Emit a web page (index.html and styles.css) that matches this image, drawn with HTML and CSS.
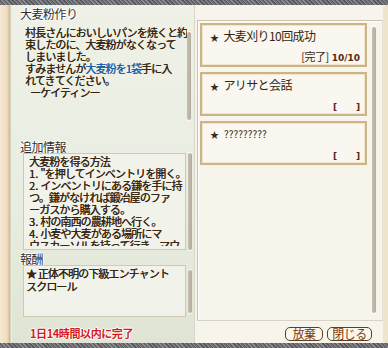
FILE: index.html
```html
<!DOCTYPE html>
<html lang="ja">
<head>
<meta charset="utf-8">
<link rel="stylesheet" href="styles.css">
</head>
<body>
<div class="win">
  <div class="stripe"></div>
  <div class="main">
    <div class="edge"></div>
    <div class="left">
      <div class="title">大麦粉作り</div>
      <div class="desc">
        <div class="desc-text">
          <div>村長さんにおいしいパンを焼くと約</div>
          <div>束したのに、大麦粉がなくなって</div>
          <div>しまいました。</div>
          <div>すみませんが<span class="hl">大麦粉を1袋</span>手に入</div>
          <div>れてきてください。</div>
          <div class="sign">ーケイティンー</div>
        </div>
        <div class="scroll desc-scroll"></div>
      </div>
      <div class="head">追加情報</div>
      <div class="row info-row">
        <div class="box info">
          <div>大麦粉を得る方法</div>
          <div><span class="num">1.</span>"を押してインベントリを開く。</div>
          <div><span class="num">2.</span>インベントリにある鎌を手に持</div>
          <div>つ。鎌がなければ鍛冶屋のファ</div>
          <div>ーガスから購入する。</div>
          <div><span class="num">3.</span>村の南西の農耕地へ行く。</div>
          <div><span class="num">4.</span>小麦や大麦がある場所にマ</div>
          <div class="cut">ウスカーソルを持って行き、マウ</div>
        </div>
        <div class="scroll"></div>
      </div>
      <div class="head head2">報酬</div>
      <div class="row reward-row">
        <div class="box reward">
          <div>★ 正体不明の下級エンチャント</div>
          <div>スクロール</div>
        </div>
        <div class="scroll reward-scroll"></div>
      </div>
      <div class="deadline">1日14時間以内に完了</div>
    </div>
    <div class="right">
      <div class="frame">
        <div class="cards">
          <div class="card">
            <div class="obj"><span class="star">★</span>大麦刈り10回成功</div>
            <div class="status"><span class="done">[完了]</span><b>10/10</b></div>
          </div>
          <div class="card">
            <div class="obj"><span class="star">★</span>アリサと会話</div>
            <div class="status"><b>[&nbsp;&nbsp;&nbsp;&nbsp;&nbsp;&nbsp;]</b></div>
          </div>
          <div class="card">
            <div class="obj small"><span class="star">★</span>?????????</div>
            <div class="status"><b>[&nbsp;&nbsp;&nbsp;&nbsp;&nbsp;&nbsp;]</b></div>
          </div>
        </div>
        <div class="scroll right-scroll"></div>
      </div>
      <div class="buttons">
        <div class="btn b1">放棄</div>
        <div class="btn b2">閉じる</div>
      </div>
    </div>
  </div>
  <div class="stripe"></div>
</div>
</body>
</html>
```
FILE: styles.css
```css
html, body {
  margin: 0;
  padding: 0;
  background: #f3f1e6;
}
.win {
  width: 388px;
  height: 348px;
  display: flex;
  flex-direction: column;
  overflow: hidden;
  font-family: "Noto Sans CJK JP", "Noto Sans", sans-serif;
  color: #36250f;
}
.stripe {
  height: 5px;
  flex: none;
  background: repeating-linear-gradient(45deg, #56575d 0 1px, #8c8c92 1px 2px, #6e6e74 2px 3px);
}
.main {
  flex: 1;
  display: flex;
  min-height: 0;
}
.edge {
  width: 12px;
  flex: none;
  background: linear-gradient(90deg, #f6e8d2 0, #efdcc0 7px, #d8c6a6 9px, #c2b698 10px, #f2f0e6 11px, #e8ece0 12px);
}
.left {
  width: 183px;
  flex: none;
  display: flex;
  flex-direction: column;
  background: linear-gradient(180deg, #eff1e7 0, #e9ede0 60%, #dfe4d4 100%);
  border-right: 1px solid #d8d6c4;
  box-sizing: border-box;
}
.title, .head {
  font-size: 12px;
  line-height: 14px;
  color: #2e2e2e;
  padding-left: 8px;
  text-shadow: 1px 0 #fff, -1px 0 #fff, 0 1px #fff, 0 -1px #fff;
  letter-spacing: -0.5px;
}
.title {
  height: 18px;
  padding-top: 2px;
  box-sizing: border-box;
}
.desc {
  height: 117px;
  display: flex;
  padding-left: 13px;
  box-sizing: border-box;
}
.desc-text {
  width: 162px;
  font-size: 11px;
  line-height: 12px;
  padding-top: 3px;
  letter-spacing: -0.9px;
  white-space: nowrap;
  overflow: hidden;
  text-shadow: 0.3px 0 currentColor;
}
.hl { color: #1f5ea6; }
.sign { padding-left: 5px; }
.scroll {
  width: 4px;
  flex: none;
  background: linear-gradient(90deg, #c7c0b2, #b3ab9c);
  border-radius: 2px;
  box-shadow: 0 1px 0 #fff, 0 -1px 0 #fff;
}
.desc-scroll {
  margin-top: 9px;
  height: 88px;
}
.head {
  height: 13px;
  line-height: 13px;
}
.head2 {
  height: 15px;
  line-height: 17px;
}
.row {
  display: flex;
  gap: 2px;
  padding-left: 11px;
}
.info-row { height: 97px; }
.reward-row { height: 52px; }
.box {
  width: 163px;
  box-sizing: border-box;
  border: 1px solid #cfc8b2;
  background: #f1f2ea;
  padding: 1px 2px 0 5px;
  font-size: 11px;
  line-height: 12px;
  letter-spacing: -0.9px;
  white-space: nowrap;
  overflow: hidden;
  text-shadow: 0.3px 0 currentColor;
}
.num {
  margin-right: 2px;
  letter-spacing: 0;
}
.info .cut {
  height: 7px;
  overflow: hidden;
}
.reward {
  padding-left: 2px;
  line-height: 13px;
  padding-top: 1px;
}
.reward-scroll {
  margin-top: 5px;
  height: 43px;
}
.deadline {
  margin-top: 9px;
  padding-left: 18px;
  font-size: 11px;
  line-height: 14px;
  font-weight: bold;
  color: #d41a1a;
  letter-spacing: -0.4px;
  text-shadow: 1px 0 #fff, -1px 0 #fff, 0 1px #fff, 0 -1px #fff;
}
.right {
  flex: 1;
  display: flex;
  flex-direction: column;
  background: #f7f5eb;
  border-right: 5px solid #efe4cc;
}
.frame {
  margin: 15px 0 0 2px;
  width: 186px;
  height: 301px;
  box-sizing: border-box;
  border: 1px solid #c8c0ae;
  border-right-color: #e6e0d2;
  border-bottom-color: #d8d2c2;
  box-shadow: inset 1px 1px 0 #fff;
  display: flex;
  padding: 2px 5px 0 2px;
  gap: 5px;
}
.cards {
  width: 167px;
  display: flex;
  flex-direction: column;
  gap: 5px;
}
.card {
  height: 44px;
  box-sizing: border-box;
  border: 2px solid #ccb488;
  box-shadow: inset 0 0 0 1px #efe6d0;
  background: #f9f7ef;
  display: flex;
  flex-direction: column;
  justify-content: space-between;
  padding: 3px 5px 1px 8px;
}
.obj {
  font-size: 12px;
  line-height: 16px;
  letter-spacing: -0.6px;
  white-space: nowrap;
}
.obj.small {
  font-size: 10px;
  letter-spacing: 0;
}
.star {
  font-size: 9px;
  margin-right: 5px;
  color: #3b2a18;
}
.status {
  text-align: right;
  font-size: 11px;
  line-height: 12px;
  white-space: nowrap;
}
.done {
  letter-spacing: -0.5px;
  margin-right: 3px;
}
.status b {
  font-family: "DejaVu Sans", sans-serif;
  font-size: 9px;
  color: #5a2610;
  font-weight: bold;
}
.right-scroll {
  margin-top: 4px;
  height: 286px;
}
.buttons {
  display: flex;
  justify-content: flex-end;
  gap: 4px;
  margin-top: 6px;
  padding-right: 11px;
}
.btn {
  height: 14px;
  box-sizing: border-box;
  border: 1px solid #5e3e22;
  border-radius: 5px;
  background: #fbf8ee;
  color: #7a3812;
  font-size: 12px;
  line-height: 12px;
  text-align: center;
  letter-spacing: -0.5px;
}
.b1 { width: 38px; }
.b2 { width: 45px; }
```
